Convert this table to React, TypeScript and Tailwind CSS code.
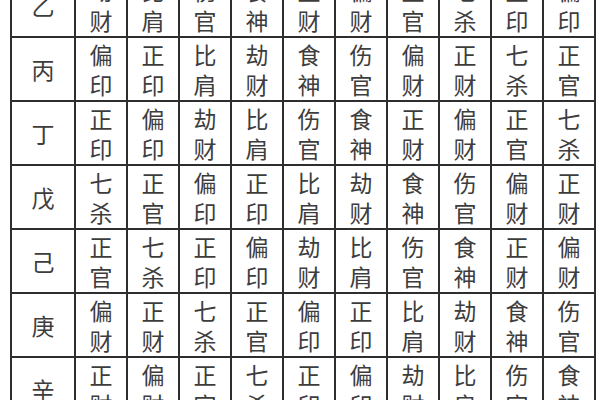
import React from "react";

const stems = ["乙", "丙", "丁", "戊", "己", "庚", "辛"];

const gods: string[][] = [
  ["劫财", "比肩", "伤官", "食神", "正财", "偏财", "正官", "七杀", "正印", "偏印"],
  ["偏印", "正印", "比肩", "劫财", "食神", "伤官", "偏财", "正财", "七杀", "正官"],
  ["正印", "偏印", "劫财", "比肩", "伤官", "食神", "正财", "偏财", "正官", "七杀"],
  ["七杀", "正官", "偏印", "正印", "比肩", "劫财", "食神", "伤官", "偏财", "正财"],
  ["正官", "七杀", "正印", "偏印", "劫财", "比肩", "伤官", "食神", "正财", "偏财"],
  ["偏财", "正财", "七杀", "正官", "偏印", "正印", "比肩", "劫财", "食神", "伤官"],
  ["正财", "偏财", "正官", "七杀", "正印", "偏印", "劫财", "比肩", "伤官", "食神"],
];

const Cell = ({ text }: { text: string }) => (
  <div className="flex flex-col items-center justify-center bg-white text-[23px] leading-[30px] text-[#3d3d3d]">
    {text.split("").map((ch, i) => (
      <span key={i}>{ch}</span>
    ))}
  </div>
);

export default function App() {
  return (
    <div
      className="h-[400px] w-[600px] overflow-hidden bg-white"
      style={{ fontFamily: '"Noto Sans CJK SC", "Noto Sans", sans-serif' }}
    >
      <div className="ml-[10px] mt-[-28px] grid w-fit grid-cols-[62px_repeat(10,50px)] auto-rows-[62px] gap-[2px] bg-[#2e2e2e] p-[2px]">
        {stems.map((stem, r) => (
          <React.Fragment key={stem}>
            <Cell text={stem} />
            {gods[r].map((g, c) => (
              <Cell key={c} text={g} />
            ))}
          </React.Fragment>
        ))}
      </div>
    </div>
  );
}
